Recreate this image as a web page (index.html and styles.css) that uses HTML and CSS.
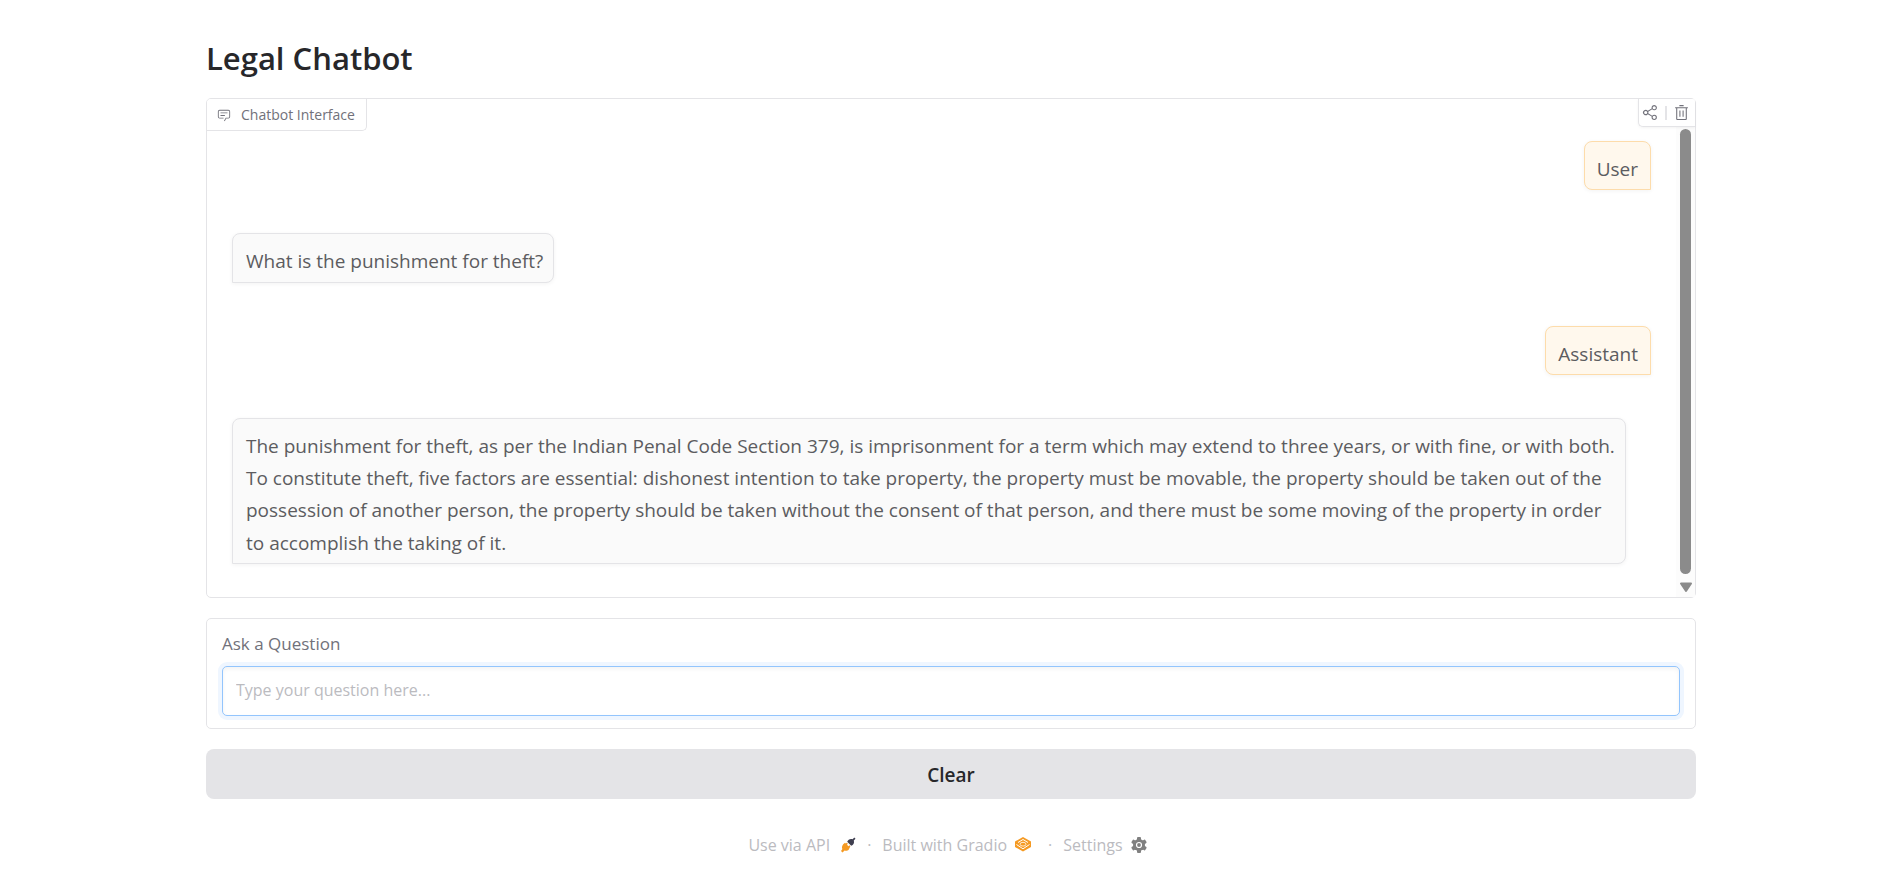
FILE: index.html
```html
<!DOCTYPE html>
<html lang="en">
<head>
<meta charset="utf-8">
<title>Legal Chatbot</title>
<link rel="stylesheet" href="styles.css">
</head>
<body>
<main class="app">
  <h1 class="title">Legal Chatbot</h1>

  <section class="block chat" aria-label="Chatbot Interface">
    <div class="chat-label">
      <svg class="chat-label-icon" viewBox="0 0 32 32" fill="currentColor" aria-hidden="true"><path d="M17.74 30 16 29l4-7h6a2 2 0 0 0 2-2V8a2 2 0 0 0-2-2H6a2 2 0 0 0-2 2v12a2 2 0 0 0 2 2h9v2H6a4 4 0 0 1-4-4V8a4 4 0 0 1 4-4h20a4 4 0 0 1 4 4v12a4 4 0 0 1-4 4h-4.84Z"/><path d="M8 10h16v2H8zm0 6h10v2H8z"/></svg>
      <span>Chatbot Interface</span>
    </div>
    <div class="chat-actions">
      <button class="icon-button" type="button" aria-label="Share">
        <svg viewBox="0 0 32 32" fill="currentColor"><path d="M23 20a5 5 0 0 0-3.89 1.89l-7.31-4.57a4.46 4.46 0 0 0 0-2.64l7.31-4.57A5 5 0 1 0 18 7a4.79 4.79 0 0 0 .2 1.32l-7.31 4.57a5 5 0 1 0 0 6.22l7.31 4.57A4.79 4.79 0 0 0 18 25a5 5 0 1 0 5-5ZM23 4a3 3 0 1 1-3 3 3 3 0 0 1 3-3ZM7 19a3 3 0 1 1 3-3 3 3 0 0 1-3 3Zm16 9a3 3 0 1 1 3-3 3 3 0 0 1-3 3Z"/></svg>
      </button>
      <span class="divider"></span>
      <button class="icon-button" type="button" aria-label="Clear chat">
        <svg viewBox="0 0 32 32" fill="currentColor"><path d="M12 12h2v12h-2zm6 0h2v12h-2z"/><path d="M4 6v2h2v20a2 2 0 0 0 2 2h16a2 2 0 0 0 2-2V8h2V6Zm4 22V8h16v20Zm4-26h8v2h-8z"/></svg>
      </button>
    </div>
    <div class="messages">
      <div class="bubble user">User</div>
      <div class="bubble bot">What is the punishment for theft?</div>
      <div class="bubble user">Assistant</div>
      <div class="bubble bot">The punishment for theft, as per the Indian Penal Code Section 379, is imprisonment for a term which may extend to three years, or with fine, or with both. To constitute theft, five factors are essential: dishonest intention to take property, the property must be movable, the property should be taken out of the possession of another person, the property should be taken without the consent of that person, and there must be some moving of the property in order to accomplish the taking of it.</div>
    </div>
    <div class="scrollbar" aria-hidden="true">
      <div class="thumb"></div>
      <svg class="arrow" viewBox="0 0 14 11"><path d="M2 1.5h10L7 9Z" fill="#8b8b8b" stroke="#8b8b8b" stroke-width="2" stroke-linejoin="round"/></svg>
    </div>
  </section>

  <section class="block ask">
    <label class="ask-label" for="question">Ask a Question</label>
    <input class="ask-input" id="question" type="text" placeholder="Type your question here...">
  </section>

  <button class="clear" type="button">Clear</button>

  <footer class="footer">
    <a class="footer-link api" href="#api">Use via API
      <svg class="footer-icon" viewBox="0 0 16 16" aria-hidden="true"><path d="M3.2 7.2 5 5.7l.8.9 1-.9 1.1 1.1-.9 1 1.5 1.4 1-.9.9 1-1.6 3.1c-1.2 1.4-2.9 1.8-4.2 1.1L2.5 15.5 1 14l1.4-1.9c-.8-1.5-.4-3.5.8-4.9Z" fill="#f59a23"/><path d="M7.2 4.8C8 2.5 10.3 1.3 12.6 2.2L14.3.5l1.2 1.2-1.7 1.7c.8 2.3-.3 4.6-2.6 5.4Z" fill="#3f3f50"/></svg>
    </a>
    <span class="dot">·</span>
    <a class="footer-link gradio" href="#gradio">Built with Gradio
      <svg class="footer-icon" viewBox="0 0 16 16" aria-hidden="true"><path d="M8 0 16 4.500v5.500L8 14.500 0 10V4.500Z" fill="#f59a23"/><path d="M3 5.500 8 2.500l5 3M1.500 7.500 8 11.800l6.500-4.300" fill="none" stroke="#fff" stroke-width="1"/><ellipse cx="8" cy="7.200" rx="3" ry="1.900" fill="none" stroke="#fff" stroke-width=".8"/></svg>
    </a>
    <span class="dot">·</span>
    <a class="footer-link" href="#settings">Settings
      <svg class="footer-icon" viewBox="0 0 16 16" aria-hidden="true"><g fill="#808080"><circle cx="8" cy="8" r="6"/><rect x="6" y="0" width="4" height="16" rx="1"/><rect x="6" y="0" width="4" height="16" rx="1" transform="rotate(60 8 8)"/><rect x="6" y="0" width="4" height="16" rx="1" transform="rotate(120 8 8)"/></g><circle cx="8" cy="8" r="2.5" fill="#808080" stroke="#fff" stroke-width="1.2"/></svg>
    </a>
  </footer>
</main>
</body>
</html>
```
FILE: styles.css
```css
* {
  box-sizing: border-box;
}

body {
  margin: 0;
  padding: 0 24px 0 36px;
  background: #fff;
  color: #27272a;
  font-family: "Open Sans", "Noto Sans", sans-serif;
}

button,
input {
  font-family: inherit;
}

.app {
  display: flex;
  flex-direction: column;
  max-width: 1490px;
  margin: 0 auto;
  padding-top: 36px;
}

.title {
  margin: 0 0 18px;
  font-size: 31px;
  font-weight: 600;
  line-height: 44px;
}

.block {
  border: 1px solid #e4e4e7;
  border-radius: 5px;
  background: #fff;
}

.chat {
  position: relative;
  display: flex;
  min-height: 500px;
  margin-bottom: 20px;
}

.chat-label {
  position: absolute;
  top: 0;
  left: 0;
  display: flex;
  align-items: center;
  gap: 10px;
  height: 32px;
  padding: 0 11px 0 10px;
  border: solid #e4e4e7;
  border-width: 0 1px 1px 0;
  border-radius: 4px 0 5px;
  background: #fff;
  color: #71717a;
  font-size: 14px;
}

.chat-label-icon {
  width: 14px;
  height: 14px;
}

.chat-actions {
  position: absolute;
  top: 0;
  right: 0;
  z-index: 1;
  display: flex;
  align-items: center;
  gap: 6px;
  height: 28px;
  padding: 0 5px 0 3px;
  border: solid #e4e4e7;
  border-width: 0 0 1px 1px;
  border-radius: 0 4px 0 5px;
  background: #fff;
  box-shadow: 0 1px 3px #0000000d;
  color: #71717a;
}

.icon-button {
  display: flex;
  padding: 0;
  border: 0;
  background: none;
  color: inherit;
}

.icon-button svg {
  width: 17px;
  height: 17px;
}

.divider {
  width: 2px;
  height: 14px;
  background: #e4e4e7;
}

.messages {
  display: flex;
  flex: 1;
  flex-direction: column;
  align-items: flex-start;
  gap: 43px;
  min-width: 0;
  padding: 42px 25px 32px;
}

.bubble {
  padding: 11px 12px 4px 13px;
  border: 1px solid #e4e4e7;
  border-radius: 8px 8px 8px 0;
  background: #fafafa;
  box-shadow: 0 1px 4px #0000000d;
  color: #5c5c60;
  font-size: 19px;
  line-height: 1.7;
}

.bubble.bot {
  margin-right: 25px;
  padding-right: 10px;
}

.bubble.user {
  align-self: flex-end;
  padding-left: 12px;
  border-color: #fddcab;
  border-radius: 8px 8px 0;
  background: #fff8ed;
}

.scrollbar {
  display: flex;
  flex-direction: column;
  align-items: center;
  gap: 8px;
  width: 19px;
  padding: 30px 0 4px;
  background: #fcfcfc;
}

.thumb {
  flex: 1;
  width: 11px;
  border-radius: 6px;
  background: #8b8b8b;
}

.arrow {
  width: 14px;
  height: 11px;
}

.ask {
  display: flex;
  flex-direction: column;
  gap: 9px;
  margin-bottom: 20px;
  padding: 12px 15px;
}

.ask-label {
  color: #71717a;
  font-size: 17px;
  line-height: 26px;
}

.ask-input {
  width: 100%;
  height: 50px;
  padding: 0 13px 2px;
  border: 1px solid #93c5fd;
  border-radius: 5px;
  outline: none;
  background: #fff;
  box-shadow: 0 0 0 4px #eff6ff, inset 0 2px 4px #0000000d;
  color: #27272a;
  font-size: 16px;
}

.ask-input::placeholder {
  color: #bbbbbf;
}

.clear {
  height: 50px;
  padding: 2px 0 0;
  border: 0;
  border-radius: 8px;
  background: #e4e4e7;
  color: #27272a;
  font-size: 19px;
  font-weight: 600;
}

.footer {
  display: flex;
  align-items: center;
  justify-content: center;
  gap: 11px;
  margin: 32px 0 8px;
  padding-right: 7px;
  color: #bbbbbf;
  font-size: 16px;
  line-height: 28px;
}

.footer-link {
  display: flex;
  align-items: center;
  gap: 8px;
  color: inherit;
  text-decoration: none;
}

.footer-link.api {
  gap: 10px;
}

.footer-link.gradio {
  margin-right: 6px;
}

.footer-icon {
  width: 16px;
  height: 16px;
}
```
